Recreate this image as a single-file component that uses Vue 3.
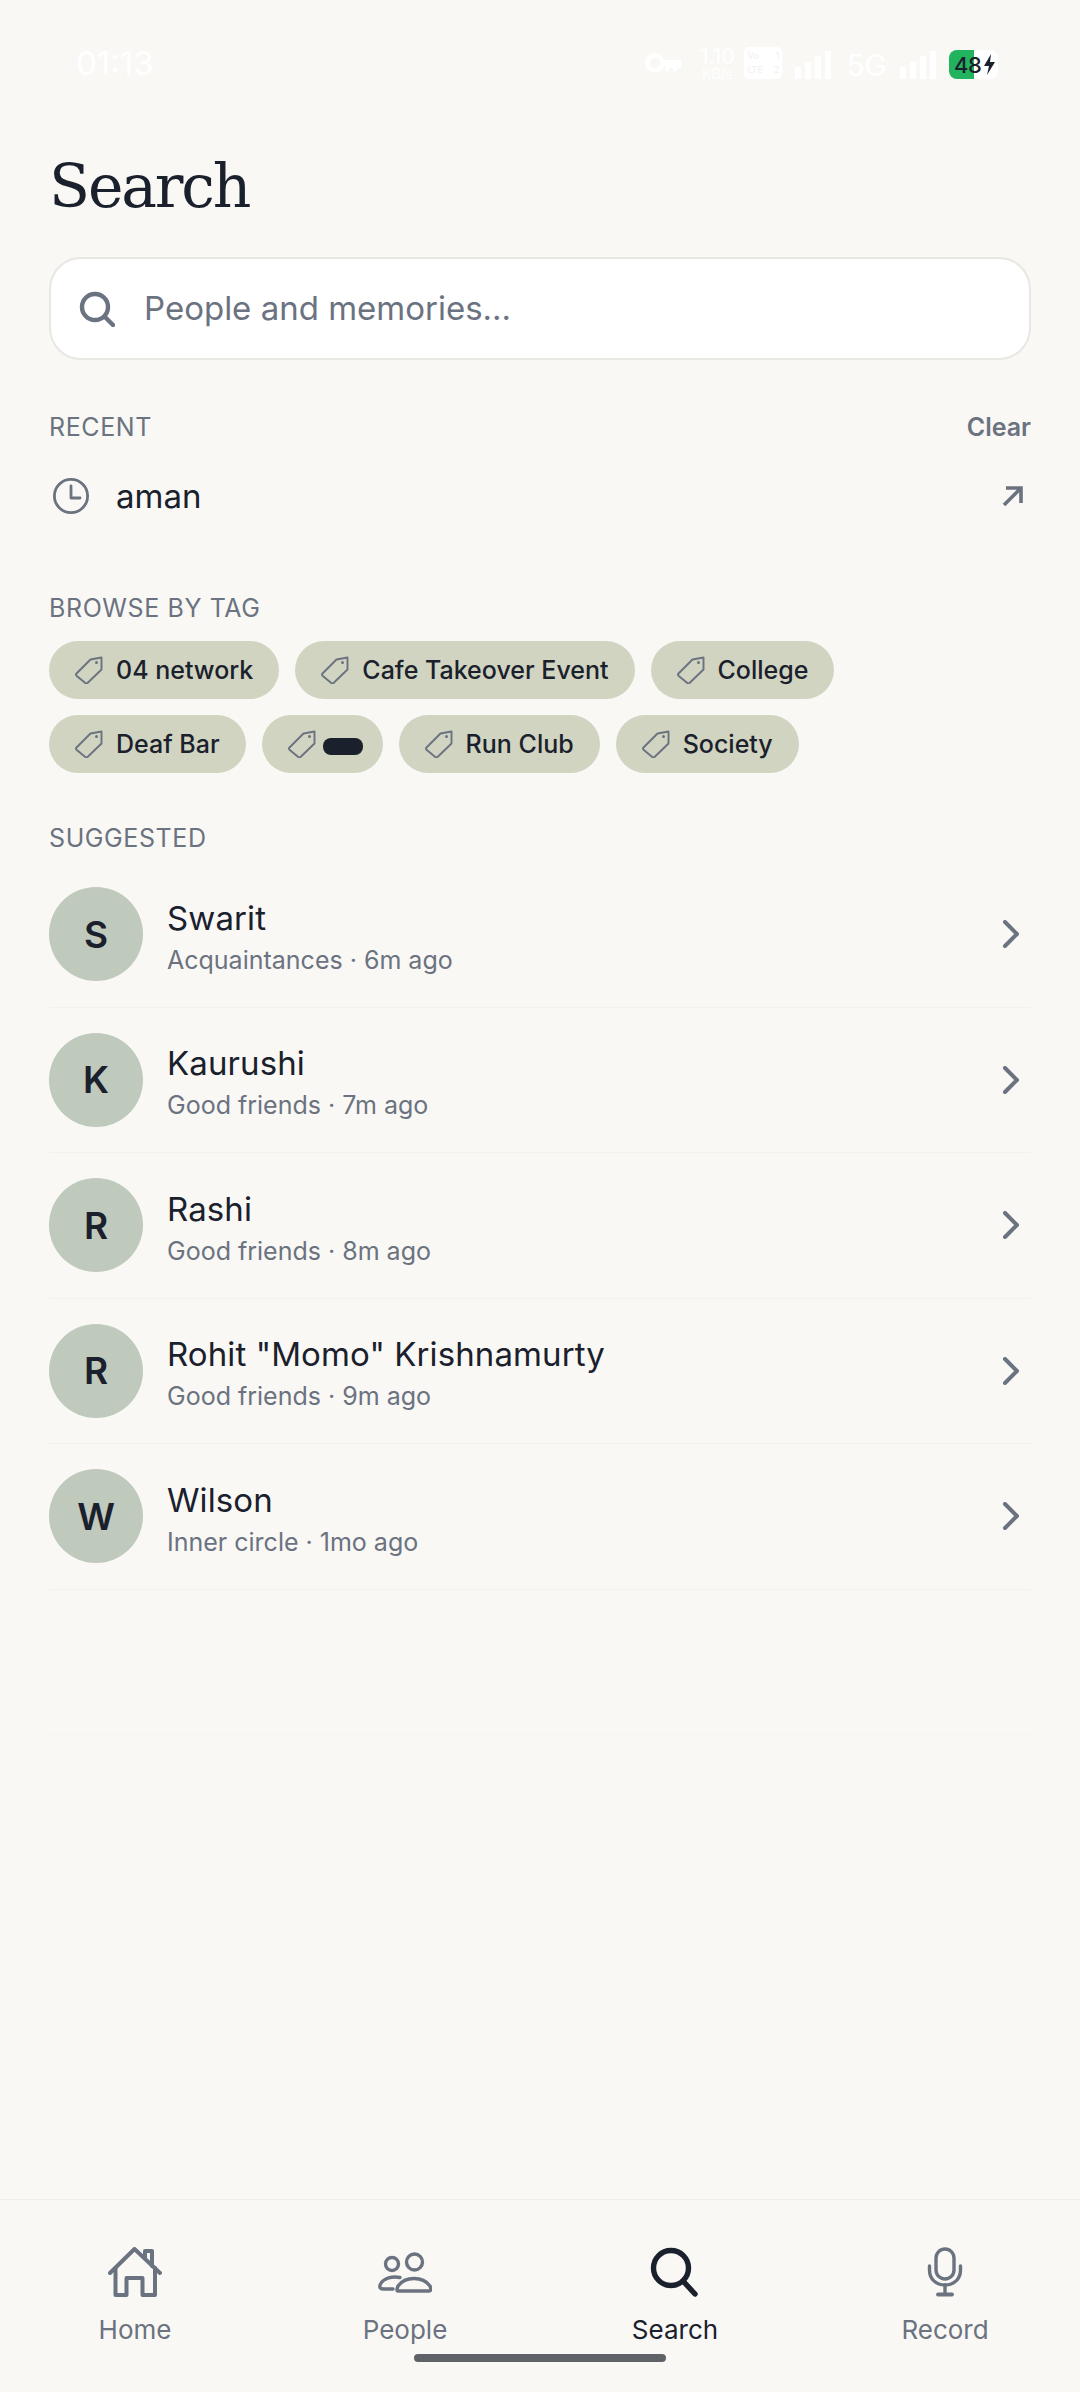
<template>
  <div class="screen">
    <div class="status-bar">
      <span class="time">01:13</span>
      <div class="status-icons">
        <svg class="key" width="36" height="20" viewBox="0 0 36 20">
          <circle cx="10" cy="10" r="7.500" fill="none" stroke="#fff" stroke-width="4.500" />
          <path d="M17 7H36V15H32V18H28V15H24V18H20V13H17Z" fill="#fff" />
        </svg>
        <div class="speed"><span>1.10</span><small>KB/s</small></div>
        <div class="volte">
          <div><span>Vo</span><span>1</span></div>
          <div><span>LTE</span><span>2</span></div>
        </div>
        <svg class="signal" width="36" height="28" viewBox="0 0 36 28">
          <rect v-for="bar in bars" :key="bar.x" :x="bar.x" :y="bar.y" width="6" :height="28 - bar.y" fill="#fff" />
        </svg>
        <span class="net">5G</span>
        <svg class="signal" width="36" height="28" viewBox="0 0 36 28">
          <rect v-for="bar in bars" :key="bar.x" :x="bar.x" :y="bar.y" width="6" :height="28 - bar.y" fill="#fff" />
        </svg>
        <div class="battery">
          <span>48</span>
          <svg width="13" height="21" viewBox="0 0 13 21"><path d="M8 0 1 12H6L4 21 12 8H7Z" fill="#1a202c" /></svg>
        </div>
      </div>
    </div>

    <main class="content">
      <h1 class="title">Search</h1>

      <div class="search-box">
        <svg width="36" height="36" viewBox="0 0 36 36" fill="none" stroke="#6b7280" stroke-width="4.400" stroke-linecap="round">
          <circle cx="16" cy="16" r="13" />
          <path d="M25.500 25.500 34 34" />
        </svg>
        <span>People and memories...</span>
      </div>

      <div class="section-head recent-head">
        <span class="label">RECENT</span>
        <span class="clear">Clear</span>
      </div>
      <div class="recent-row">
        <svg width="38" height="38" viewBox="0 0 38 38" fill="none" stroke="#6b7280" stroke-width="2.800" stroke-linecap="round" stroke-linejoin="round">
          <circle cx="19" cy="19" r="16.600" />
          <path d="M19 9V21H28" />
        </svg>
        <span class="recent-text">aman</span>
        <svg class="recent-arrow" width="22" height="22" viewBox="0 0 22 22" fill="none" stroke="#6b7280" stroke-width="3.600">
          <path d="M3 20 19 4M5 3H20V18" />
        </svg>
      </div>

      <div class="label tag-label">BROWSE BY TAG</div>
      <div class="tags">
        <div v-for="tag in tags" :key="tag.name" class="tag">
          <svg width="28" height="28" viewBox="0 0 28 28" fill="none" stroke="#6b7280" stroke-width="1.900" stroke-linejoin="round">
            <path d="M1.500 17.500 15.500 3.500 26.500 1.500V13.500L12.500 27a1.600 1.600 0 0 1-2.200 0L1.500 19.700a1.600 1.600 0 0 1 0-2.200Z" />
            <circle cx="21.500" cy="6.500" r="1.500" fill="#6b7280" stroke="none" />
          </svg>
          <span v-if="tag.hidden" class="redacted"></span>
          <span v-else>{{ tag.name }}</span>
        </div>
      </div>

      <div class="label suggested-label">SUGGESTED</div>
      <div class="people">
        <div v-for="person in people" :key="person.name" class="person">
          <div class="avatar">{{ person.name[0] }}</div>
          <div class="person-text">
            <div class="person-name">{{ person.name }}</div>
            <div class="person-sub">{{ person.sub }}</div>
          </div>
          <svg class="chevron" width="18" height="28" viewBox="0 0 18 28" fill="none" stroke="#6b7280" stroke-width="4" stroke-linecap="round" stroke-linejoin="round">
            <path d="M3 2 15 14 3 26" />
          </svg>
        </div>
        <div class="person person-ghost"></div>
      </div>
    </main>

    <nav class="bottom-nav">
      <div class="nav-item">
        <svg width="54" height="50" viewBox="0 0 54 50" fill="none" stroke="#6b7280" stroke-width="4" stroke-linecap="round" stroke-linejoin="round">
          <path d="M2 26 26.500 2 52 26" />
          <path d="M37 11V4H44V19" />
          <path d="M7.500 21V48H18.500V31H34.500V48H47V21" />
        </svg>
        <span>Home</span>
      </div>
      <div class="nav-item">
        <svg width="54" height="50" viewBox="0 0 54 50" fill="none" stroke="#6b7280" stroke-width="3.400" stroke-linecap="round" stroke-linejoin="round">
          <g transform="translate(0 6)">
            <circle cx="14" cy="11" r="6.500" />
            <circle cx="36.500" cy="9" r="8" />
            <path d="M20 38Q18 38 20 33C24 27.500 30 25.500 36 25.500S48 27.500 52 33Q54 38 51 38Z" />
            <path d="M22 24.500C14 23 6 25 2.500 31 1 34 2 36 5 36H15" />
          </g>
        </svg>
        <span>People</span>
      </div>
      <div class="nav-item active">
        <svg width="54" height="50" viewBox="0 0 54 50" fill="none" stroke="#1a202c" stroke-width="5.400" stroke-linecap="round">
          <circle cx="23" cy="21" r="17.500" />
          <path d="M35 34 47 47" />
        </svg>
        <span>Search</span>
      </div>
      <div class="nav-item">
        <svg width="54" height="50" viewBox="0 0 54 50" fill="none" stroke="#6b7280" stroke-width="3.400" stroke-linecap="round">
          <rect x="18" y="2" width="18" height="30" rx="9" />
          <path d="M11.500 19V23C11.500 32 18 38 27 38S42.500 32 42.500 23V19" />
          <path d="M27 38V47" />
          <path d="M20 47.500H34" stroke-width="3.800" />
        </svg>
        <span>Record</span>
      </div>
    </nav>
    <div class="home-indicator"></div>
  </div>
</template>

<script setup>
const bars = [
  { x: 0, y: 16 },
  { x: 10, y: 11 },
  { x: 20, y: 5 },
  { x: 30, y: 0 },
];

const tags = [
  { name: '04 network' },
  { name: 'Cafe Takeover Event' },
  { name: 'College' },
  { name: 'Deaf Bar' },
  { name: 'hidden', hidden: true },
  { name: 'Run Club' },
  { name: 'Society' },
];

const people = [
  { name: 'Swarit', sub: 'Acquaintances · 6m ago' },
  { name: 'Kaurushi', sub: 'Good friends · 7m ago' },
  { name: 'Rashi', sub: 'Good friends · 8m ago' },
  { name: 'Rohit "Momo" Krishnamurty', sub: 'Good friends · 9m ago' },
  { name: 'Wilson', sub: 'Inner circle · 1mo ago' },
];
</script>

<style>
body {
  background: #f9f8f5;
}
</style>

<style scoped>
.screen {
  position: relative;
  display: flex;
  flex-direction: column;
  height: 2392px;
  overflow: hidden;
  background: #f9f8f5;
  color: #1a202c;
  font-family: Inter, "Noto Sans", sans-serif;
}

/* status bar: white on the pale background, as in the capture */
.status-bar {
  display: flex;
  align-items: center;
  justify-content: space-between;
  height: 124px;
  padding: 2px 82px 0 76px;
  box-sizing: border-box;
  color: #fff;
  flex-shrink: 0;
}
.time {
  font-size: 33px;
  line-height: 40px;
}
.status-icons {
  display: flex;
  align-items: center;
}
.key {
  margin-right: 21px;
}
.speed {
  display: flex;
  flex-direction: column;
  align-items: center;
  margin-right: 12px;
  font-size: 21px;
  line-height: 20px;
  width: 30px;
}
.speed small {
  font-size: 14px;
  line-height: 13px;
}
.volte {
  display: flex;
  flex-direction: column;
  justify-content: center;
  gap: 4px;
  width: 38px;
  height: 32px;
  padding: 0 3px;
  margin-right: 13px;
  box-sizing: border-box;
  background: #fff;
  border-radius: 5px;
  color: #f1f0ec;
  font-size: 9px;
  line-height: 10px;
}
.volte div {
  display: flex;
  justify-content: space-between;
}
.signal {
  margin-top: 4px;
}
.net {
  margin: 4px 13px 0 15px;
  font-size: 30px;
  line-height: 30px;
}
.battery {
  display: flex;
  align-items: center;
  width: 49px;
  height: 29px;
  padding-left: 5px;
  margin-left: 13px;
  margin-top: 3px;
  box-sizing: border-box;
  border-radius: 8px;
  background: linear-gradient(90deg, #22b35e 25px, #fff 25px);
  color: #1a202c;
  font-size: 22px;
  font-weight: 500;
  letter-spacing: -0.5px;
}
.battery svg {
  margin-left: 2px;
}

.content {
  flex: 1;
  padding: 0 49px;
}
.title {
  margin: 26px 0 0;
  font-family: "DejaVu Serif", "Liberation Serif", serif;
  font-weight: 400;
  font-size: 60px;
  line-height: 72px;
  letter-spacing: -2.200px;
}
.search-box {
  display: flex;
  align-items: center;
  gap: 29px;
  height: 103px;
  margin-top: 35px;
  padding: 0 0 0 28px;
  box-sizing: border-box;
  background: #fff;
  border: 2px solid #e8e7e2;
  border-radius: 32px;
  color: #6b7280;
  font-size: 33px;
  line-height: 40px;
}
.search-box span {
  margin-top: -2px;
}

.label {
  font-size: 25px;
  line-height: 30px;
  letter-spacing: 0.6px;
  color: #6b7280;
}
.section-head {
  display: flex;
  align-items: center;
  justify-content: space-between;
}
.recent-head {
  margin-top: 52px;
}
.clear {
  font-size: 25px;
  line-height: 30px;
  font-weight: 600;
  color: #6b7280;
}
.recent-row {
  display: flex;
  align-items: center;
  margin-top: 34px;
  padding-left: 3px;
}
.recent-text {
  margin-left: 26px;
  font-size: 33px;
  line-height: 40px;
}
.recent-arrow {
  margin-left: auto;
  margin-right: 8px;
}

.tag-label {
  margin-top: 77px;
}
.tags {
  display: flex;
  flex-wrap: wrap;
  gap: 16px;
  margin-top: 18px;
  max-width: 860px;
}
.tag {
  display: flex;
  align-items: center;
  gap: 13px;
  height: 58px;
  padding: 0 26px;
  box-sizing: border-box;
  border-radius: 29px;
  background: #d0d4c0;
  font-size: 25px;
  font-weight: 500;
}
.redacted {
  display: block;
  width: 40px;
  height: 17px;
  margin: 4px -6px 0;
  border-radius: 8px;
  background: #1a202c;
}
.suggested-label {
  margin-top: 50px;
}

.people {
  margin-top: 9px;
}
.person {
  display: flex;
  align-items: center;
  height: 145.500px;
  box-sizing: border-box;
  border-bottom: 1px solid #f2f1ed;
}
.person-ghost {
  border-bottom-color: #f5f4f1;
}
.avatar {
  display: flex;
  align-items: center;
  justify-content: center;
  width: 94px;
  height: 94px;
  flex-shrink: 0;
  border-radius: 50%;
  background: #bfc9bc;
  font-size: 37px;
  font-weight: 600;
}
.person-text {
  flex: 1;
  margin-left: 24px;
  padding-top: 5px;
}
.person-name {
  font-size: 33px;
  line-height: 42px;
  letter-spacing: 0.1px;
}
.person-sub {
  margin-top: 4px;
  font-size: 25px;
  line-height: 34px;
  color: #6b7280;
}
.chevron {
  margin-right: 11px;
}

.bottom-nav {
  display: grid;
  grid-template-columns: repeat(4, 1fr);
  height: 193px;
  padding-top: 47px;
  box-sizing: border-box;
  border-top: 1px solid #f0efeb;
  flex-shrink: 0;
}
.nav-item {
  display: flex;
  flex-direction: column;
  align-items: center;
  color: #6b7280;
  font-size: 26px;
  line-height: 34px;
}
.nav-item span {
  margin-top: 16px;
}
.nav-item.active {
  color: #1a202c;
}
.home-indicator {
  position: absolute;
  left: 414px;
  bottom: 30px;
  width: 252px;
  height: 8px;
  border-radius: 4px;
  background: #5f6368;
}
</style>
